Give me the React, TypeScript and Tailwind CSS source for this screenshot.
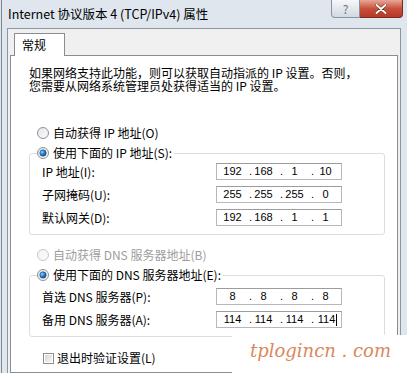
import React from "react";

const Radio = ({ checked, disabled }: { checked?: boolean; disabled?: boolean }) => (
  <svg width="12" height="12" viewBox="0 0 12 12" className="shrink-0">
    <defs>
      <linearGradient id={disabled ? "rbgd" : "rbg"} x1="0" y1="0" x2="1" y2="1">
        <stop offset="0" stopColor={disabled ? "#f4f4f4" : "#e4e6e8"} />
        <stop offset="1" stopColor={disabled ? "#fafafa" : "#fbfbfb"} />
      </linearGradient>
      <radialGradient id="rdot" cx="0.35" cy="0.35" r="0.75">
        <stop offset="0" stopColor="#8fd3f5" />
        <stop offset="0.5" stopColor="#2a7fcf" />
        <stop offset="1" stopColor="#0f3f7a" />
      </radialGradient>
    </defs>
    <circle
      cx="6"
      cy="6"
      r="5.5"
      fill={`url(#${disabled ? "rbgd" : "rbg"})`}
      stroke={disabled ? "#c4c8cc" : "#8c9197"}
      strokeWidth="1"
    />
    {checked && <circle cx="6" cy="6" r="3.2" fill="url(#rdot)" stroke="#1b4d86" strokeWidth="0.6" />}
  </svg>
);

const Checkbox = () => (
  <div className="h-[11px] w-[11px] shrink-0 border border-[#8e8f8f] bg-white p-[1px]">
    <div className="h-full w-full bg-gradient-to-br from-[#d6d6d6] to-[#f6f6f6]" />
  </div>
);

const IpBox = ({ parts, caret }: { parts: string[]; caret?: boolean }) => (
  <div className="flex h-[17px] w-[126px] shrink-0 border border-[#b5b8bd] border-t-[#9a9c9f] bg-white font-['Liberation_Sans',sans-serif] text-[11px] leading-[15px] text-black">
    {parts.map((p, i) => (
      <div key={i} className="relative flex w-[31px] items-center justify-center">
        {i > 0 && <span className="absolute left-[1px]">.</span>}
        <span className={i === 3 && caret ? "flex items-center pl-[4px]" : ""}>
          {p}
          {i === 3 && caret && <span className="ml-[1px] inline-block h-[12px] w-px bg-black" />}
        </span>
      </div>
    ))}
  </div>
);

const Row = ({ label, parts, caret }: { label: string; parts: string[]; caret?: boolean }) => (
  <div className="flex h-[17px] items-center">
    <span className="w-[174px] shrink-0">{label}</span>
    <IpBox parts={parts} caret={caret} />
  </div>
);

export default function App() {
  return (
    <div className="relative flex h-[373px] w-[407px] flex-col overflow-hidden bg-[#dfe6ee] font-['Noto_Sans_CJK_SC','Liberation_Sans',sans-serif] text-black">
      {/* title bar */}
      <div className="flex h-[28px] shrink-0 items-start">
        <div className="ml-[1px] h-full w-px bg-[#7d858f]" />
        <span className="ml-[6px] mt-[5px] text-[12.5px] leading-[18px] text-black">
          Internet 协议版本 4 (TCP/IPv4) 属性
        </span>
        <div className="ml-auto mr-[4px] flex h-[18px]">
          <div className="flex w-[29px] items-center justify-center rounded-bl-[4px] border border-t-0 border-[#8894a2] bg-gradient-to-b from-[#f5f7f9] to-[#d3d9e0] text-[12px] leading-none text-[#6a7480]">
            ?
          </div>
          <div className="flex w-[43px] items-center justify-center rounded-br-[4px] border border-l-0 border-t-0 border-[#7a2a20] bg-gradient-to-b from-[#e8a598] via-[#c8503c] to-[#b53a24]">
            <svg width="12" height="10" viewBox="0 0 12 10">
              <path d="M1.5 1 L10.5 9 M10.5 1 L1.5 9" stroke="#5a1a10" strokeWidth="3" strokeLinecap="round" />
              <path d="M1.5 1 L10.5 9 M10.5 1 L1.5 9" stroke="#ffffff" strokeWidth="2" strokeLinecap="round" />
            </svg>
          </div>
        </div>
      </div>

      {/* body */}
      <div className="flex min-h-0 flex-1">
        <div className="ml-[1px] w-px bg-[#7d858f]" />
        <div className="w-[5px]" />
        <div className="flex min-h-0 w-[394px] flex-col border-l border-r border-t border-[#8d959e] bg-[#f0f0f0] px-[2px]">
          {/* tab */}
          <div className="mt-[4px] flex pl-[4px]">
            <div className="relative z-10 -mb-px flex h-[23px] w-[51px] items-center border border-b-0 border-[#898c95] bg-white pl-[7px] text-[12px] leading-none">
              常规
            </div>
          </div>
          {/* panel */}
          <div className="flex flex-1 flex-col border border-[#898c95] bg-white text-[12px] leading-[14px]">
            <p className="ml-[18px] mt-[10px] leading-[13px]">
              如果网络支持此功能，则可以获取自动指派的 IP 设置。否则，
              <br />
              您需要从网络系统管理员处获得适当的 IP 设置。
            </p>

            <div className="ml-[26px] mt-[31px] flex h-[20px] items-center gap-[4px]">
              <Radio />
              <span>自动获得 IP 地址(O)</span>
            </div>

            <fieldset className="ml-[18px] w-[356px] rounded-[3px] border border-[#d5dfe5] pb-[8px] pl-[12px]">
              <legend className="ml-[-5px] flex h-[20px] items-center gap-[4px] pr-[2px]">
                <Radio checked />
                <span>使用下面的 IP 地址(S):</span>
              </legend>
              <div className="flex flex-col gap-[6px]">
                <Row label="IP 地址(I):" parts={["192", "168", "1", "10"]} />
                <Row label="子网掩码(U):" parts={["255", "255", "255", "0"]} />
                <Row label="默认网关(D):" parts={["192", "168", "1", "1"]} />
              </div>
            </fieldset>

            <div className="ml-[26px] mt-[10px] flex h-[20px] items-center gap-[4px] text-[#9d9d9d]">
              <Radio disabled />
              <span>自动获得 DNS 服务器地址(B)</span>
            </div>

            <fieldset className="ml-[18px] w-[356px] rounded-[3px] border border-[#d5dfe5] pb-[8px] pl-[12px] pt-[3px]">
              <legend className="ml-[-5px] flex h-[20px] items-center gap-[4px] pr-[2px]">
                <Radio checked />
                <span>使用下面的 DNS 服务器地址(E):</span>
              </legend>
              <div className="flex flex-col gap-[6px]">
                <Row label="首选 DNS 服务器(P):" parts={["8", "8", "8", "8"]} />
                <Row label="备用 DNS 服务器(A):" parts={["114", "114", "114", "114"]} caret />
              </div>
            </fieldset>

            <div className="ml-[32px] mt-[11px] flex h-[20px] items-center gap-[3px]">
              <Checkbox />
              <span>退出时验证设置(L)</span>
            </div>
          </div>
        </div>
      </div>

      {/* watermark */}
      <div className="absolute bottom-0 left-[232px] right-0 top-[335px] flex items-center justify-center bg-white pb-[6px] pl-[2px] font-['DejaVu_Serif',serif] text-[18px] italic leading-none text-[#d9885c]">
        tplogincn . com
      </div>
    </div>
  );
}
